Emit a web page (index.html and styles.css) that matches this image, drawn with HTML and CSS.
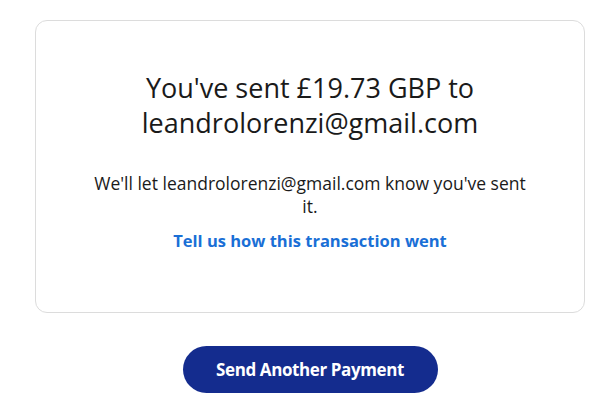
FILE: index.html
```html
<!DOCTYPE html>
<html lang="en">
<head>
<meta charset="utf-8">
<title>Payment sent</title>
<link rel="stylesheet" href="styles.css">
</head>
<body>
<main class="page">
  <section class="card">
    <h1 class="title">You've sent £19.73 GBP to leandrolorenzi@gmail.com</h1>
    <p class="note">We'll let leandrolorenzi@gmail.com know you've sent it.</p>
    <a class="feedback" href="#">Tell us how this transaction went</a>
  </section>
  <button class="primary" type="button">Send Another Payment</button>
</main>
</body>
</html>
```

FILE: styles.css
```css
html, body {
  margin: 0;
  padding: 0;
  background: #ffffff;
}
body {
  font-family: "Open Sans", "Noto Sans", sans-serif;
  color: #1a1a1a;
}
.page {
  display: flex;
  flex-direction: column;
  align-items: center;
  padding: 20px 0 0 8px;
}
.card {
  box-sizing: border-box;
  width: 550px;
  height: 293px;
  border: 1px solid #dcdcdc;
  border-radius: 12px;
  display: flex;
  flex-direction: column;
  align-items: center;
  padding: 49px 40px 0;
  text-align: center;
}
.title {
  margin: 0;
  font-weight: 400;
  font-size: 27px;
  line-height: 35px;
  width: 380px;
}
.note {
  margin: 32px 0 0;
  font-size: 17.5px;
  line-height: 23px;
  width: 445px;
}
.feedback {
  margin-top: 12px;
  font-size: 16.5px;
  line-height: 22px;
  font-weight: 700;
  color: #1a6fd6;
  text-decoration: none;
}
.primary {
  margin-top: 33px;
  width: 255px;
  height: 47px;
  border: none;
  border-radius: 24px;
  background: #142c8e;
  color: #ffffff;
  font-family: "Open Sans", "Noto Sans", sans-serif;
  font-size: 17px;
  font-weight: 700;
  letter-spacing: -0.4px;
}
```
